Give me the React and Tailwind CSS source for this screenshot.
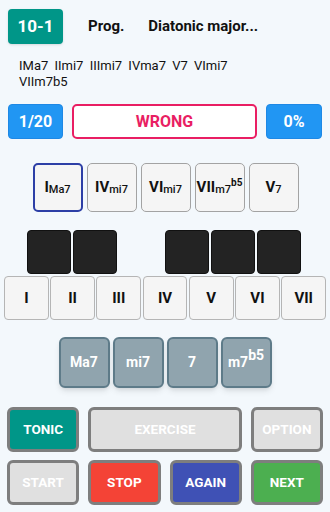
import React from 'react';

const chords = [
  { root: 'I', q: 'Ma7', sel: true },
  { root: 'IV', q: 'mi7' },
  { root: 'VI', q: 'mi7' },
  { root: 'VII', q: 'm7', sup: 'b5' },
  { root: 'V', q: '7' },
];

const degrees = ['I', 'II', 'III', 'IV', 'V', 'VI', 'VII'];

function ChordButton({ root, q, sup, sel }) {
  return (
    <div
      className={
        'w-[50px] h-[49px] rounded-[5px] bg-[#f5f5f5] flex items-center justify-center text-[#111] ' +
        (sel ? 'border-2 border-[#2d3fa6]' : 'border-[1.5px] border-[#a3a3a3]')
      }
    >
      <span className="text-[15px] font-bold leading-none">{root}</span>
      <span className="text-[11px] font-medium leading-none mt-[3px]">{q}</span>
      {sup && <span className="text-[10px] font-bold leading-none -mt-[10px]">{sup}</span>}
    </div>
  );
}

function BottomButton({ label, color, span }) {
  return (
    <div
      className={
        'h-[45px] rounded-[6px] border-[3px] border-[#7e7e7e] flex items-center justify-center text-white text-[13.5px] font-bold ' +
        color +
        (span ? ' col-span-2' : '')
      }
    >
      {label}
    </div>
  );
}

export default function App() {
  return (
    <div className="w-[330px] h-[512px] bg-[#f3f8fc] overflow-hidden font-['Roboto',sans-serif]">
      {/* header */}
      <div className="flex items-center pt-[9px] pl-[8px]">
        <div className="w-[55px] h-[35px] rounded-[4px] bg-[#009688] shadow-sm flex items-center justify-center text-white text-[17px] font-bold">
          10-1
        </div>
        <div className="ml-[25px] text-[15px] font-bold text-[#111]">Prog.</div>
        <div className="ml-[24px] text-[15px] font-bold text-[#111]">Diatonic major...</div>
      </div>

      {/* progression text */}
      <div className="mt-[14px] pl-[19px] pr-[60px] text-[13px] leading-[16px] text-[#111] [word-spacing:3px]">
        IMa7 IImi7 IIImi7 IVma7 V7 VImi7 VIIm7b5
      </div>

      {/* status row */}
      <div className="flex items-center mt-[14px] px-[8px] gap-[9px]">
        <div className="w-[55px] h-[35px] rounded-[4px] bg-[#2196f3] border border-[#1e88e5] flex items-center justify-center text-white text-[16px] font-bold">
          1/20
        </div>
        <div className="w-[185px] h-[35px] rounded-[5px] bg-white border-2 border-[#e91e63] flex items-center justify-center text-[#e91e63] text-[16px] font-bold">
          WRONG
        </div>
        <div className="w-[56px] h-[35px] rounded-[4px] bg-[#2196f3] border border-[#1e88e5] flex items-center justify-center text-white text-[16px] font-bold">
          0%
        </div>
      </div>

      {/* answer chords */}
      <div className="flex justify-center gap-[4px] mt-[24px] pl-[1px]">
        {chords.map((c) => (
          <ChordButton key={c.root} {...c} />
        ))}
      </div>

      {/* keyboard */}
      <div className="flex gap-[2px] mt-[18px] pl-[27px]">
        {[0, 1, 2, 3, 4, 5].map((i) => (
          <div
            key={i}
            className={
              'w-[44px] h-[44px] rounded-[4px] ' +
              (i === 2 ? 'invisible' : 'bg-[#232323] border border-[#111]')
            }
          />
        ))}
      </div>
      <div className="flex gap-[1.5px] mt-[2px] px-[4px]">
        {degrees.map((d) => (
          <div
            key={d}
            className="flex-1 h-[44px] rounded-[4px] bg-[#f5f5f5] border border-[#b5b5b5] flex items-center justify-center text-[15px] font-bold text-[#111]"
          >
            {d}
          </div>
        ))}
      </div>

      {/* chord qualities */}
      <div className="flex justify-center gap-[3px] mt-[17px]">
        {[['Ma7'], ['mi7'], ['7'], ['m7', 'b5']].map(([q, s]) => (
          <div
            key={q}
            className="w-[51px] h-[51px] rounded-[6px] bg-[#90a4ae] border-2 border-[#5e7b89] shadow-md flex items-center justify-center text-white text-[14px] font-bold"
          >
            <span>{q}</span>
            {s && <span className="-mt-[14px]">{s}</span>}
          </div>
        ))}
      </div>

      {/* controls */}
      <div className="grid grid-cols-4 gap-x-[9px] gap-y-[8px] px-[7px] mt-[19px]">
        <BottomButton label="TONIC" color="bg-[#009688]" />
        <BottomButton label="EXERCISE" color="bg-[#e0e0e0]" span />
        <BottomButton label="OPTION" color="bg-[#e0e0e0]" />
        <BottomButton label="START" color="bg-[#e0e0e0]" />
        <BottomButton label="STOP" color="bg-[#f44336]" />
        <BottomButton label="AGAIN" color="bg-[#3f51b5]" />
        <BottomButton label="NEXT" color="bg-[#4caf50]" />
      </div>
    </div>
  );
}
